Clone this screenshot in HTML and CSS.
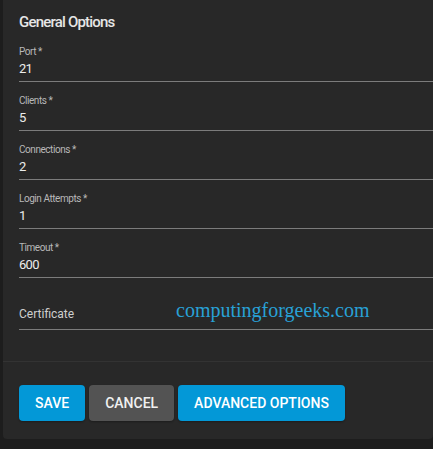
FILE: index.html
```html
<!DOCTYPE html>
<html>
<head>
<meta charset="utf-8">
<link rel="stylesheet" href="styles.css">
</head>
<body>
<div class="page">
  <div class="card">
    <div class="form">
      <h2 class="title">General Options</h2>
      <div class="field">
        <div class="label">Port *</div>
        <div class="value">21</div>
      </div>
      <div class="field">
        <div class="label">Clients *</div>
        <div class="value">5</div>
      </div>
      <div class="field">
        <div class="label">Connections *</div>
        <div class="value">2</div>
      </div>
      <div class="field">
        <div class="label">Login Attempts *</div>
        <div class="value">1</div>
      </div>
      <div class="field">
        <div class="label">Timeout *</div>
        <div class="value">600</div>
      </div>
      <div class="field field-cert">
        <div class="placeholder">Certificate</div>
        <div class="watermark">computingforgeeks.com</div>
      </div>
    </div>
    <div class="actions">
      <button class="btn btn-primary">Save</button>
      <button class="btn btn-secondary">Cancel</button>
      <button class="btn btn-primary">Advanced Options</button>
    </div>
  </div>
</div>
</body>
</html>
```

FILE: styles.css
```css
html, body {
  margin: 0;
  padding: 0;
  background: #1d1d1d;
  overflow: hidden;
  width: 433px;
  height: 449px;
}

.page {
  padding-left: 3px;
  font-family: Roboto, "Liberation Sans", sans-serif;
}

.card {
  width: 430px;
  height: 439px;
  margin-right: -30px;
  background: #282828;
  border-radius: 0 0 4px 4px;
  box-sizing: border-box;
  overflow: hidden;
}

.form {
  padding: 12px 0 31px 16px;
  border-bottom: 1px solid #333333;
}

.title {
  margin: 0;
  font-size: 15px;
  line-height: 21px;
  font-weight: 500;
  letter-spacing: -0.8px;
  color: #e6e6e6;
}

.field {
  padding: 13px 0 4px 0;
  border-bottom: 1px solid #7c7c7c;
  position: relative;
}

.label {
  font-size: 10px;
  line-height: 12px;
  letter-spacing: -0.45px;
  color: #b8b8b8;
}

.value {
  margin-top: 3px;
  font-size: 13px;
  line-height: 16px;
  letter-spacing: -0.7px;
  color: #ececec;
}

.field-cert {
  padding: 29px 0 7px 0;
}

.placeholder {
  font-size: 12px;
  line-height: 15px;
  color: #cfcfcf;
}

.watermark {
  position: absolute;
  left: 157px;
  top: 20px;
  font-family: "Liberation Serif", serif;
  font-size: 20px;
  line-height: 24px;
  color: #28a1d6;
  letter-spacing: 0;
}

.actions {
  display: flex;
  gap: 4px;
  padding: 23px 0 0 16px;
}

.btn {
  border: none;
  border-radius: 4px;
  height: 36px;
  padding: 0 16px;
  font-family: Roboto, "Liberation Sans", sans-serif;
  font-size: 14px;
  font-weight: 500;
  text-transform: uppercase;
  color: #ffffff;
  letter-spacing: 0;
  box-shadow: 0 1px 2px rgba(0,0,0,0.3);
}

.btn-primary {
  background: #0398d7;
}

.btn-secondary {
  background: #535353;
  color: #f0f0f0;
}
```
